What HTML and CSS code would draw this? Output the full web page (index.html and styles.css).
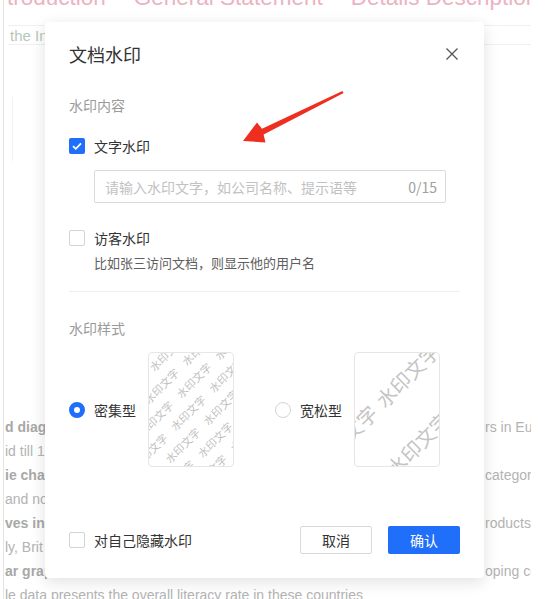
FILE: index.html
```html
<!DOCTYPE html>
<html lang="zh-CN">
<head>
<meta charset="utf-8">
<title>文档水印</title>
<link rel="stylesheet" href="styles.css">
</head>
<body>
<div class="page">
  <div class="tabs"><span>troduction</span><span>General Statement</span><span>Details Description</span></div>
  <div class="intro">the Introduction of the charts</div>
  <div class="box"></div>
  <div class="rows">
    <div class="row"><b>d diagram</b><span class="r">rs in Europe</span></div>
    <div class="row"><span>id till 1</span><span class="r"></span></div>
    <div class="row"><b>ie chart</b><span class="r">category</span></div>
    <div class="row"><span>and no</span><span class="r"></span></div>
    <div class="row"><b>ves in</b><span class="r">roducts</span></div>
    <div class="row"><span>ly, Brit</span><span class="r"></span></div>
    <div class="row"><b>ar graph</b><span class="r">oping countries</span></div>
    <div class="row"><span>le data presents the overall literacy rate in these countries</span></div>
  </div>
</div>

<div class="dialog">
  <div class="header">
    <div class="title">文档水印</div>
    <svg class="close" width="12" height="12" viewBox="0 0 12 12"><path d="M0.5 0.5 L11.5 11.5 M11.5 0.5 L0.5 11.5" stroke="#555" stroke-width="1.3" fill="none"/></svg>
  </div>

  <div class="section-label">水印内容</div>

  <div class="check-row first">
    <span class="cb checked"><svg width="16" height="16" viewBox="0 0 16 16"><path d="M4 8.2 L6.8 10.8 L12 5.4" stroke="#fff" stroke-width="1.8" fill="none"/></svg></span>
    <span>文字水印</span>
  </div>
  <div class="input-wrap">
    <input class="wm-input" type="text" placeholder="请输入水印文字，如公司名称、提示语等">
    <span class="count">0/15</span>
  </div>

  <div class="check-row visitor">
    <span class="cb"></span>
    <span>访客水印</span>
  </div>
  <div class="hint">比如张三访问文档，则显示他的用户名</div>

  <div class="divider"></div>

  <div class="section-label style-label">水印样式</div>

  <div class="styles">
    <div class="option">
      <span class="radio on"></span>
      <span class="opt-label">密集型</span>
      <div class="preview dense">
        <div class="layer">
          <div class="ln"><span>水印文字</span><span>水印文字</span><span>水印文字</span><span>水印文字</span><span>水印文字</span></div>
          <div class="ln odd"><span>水印文字</span><span>水印文字</span><span>水印文字</span><span>水印文字</span><span>水印文字</span></div>
          <div class="ln"><span>水印文字</span><span>水印文字</span><span>水印文字</span><span>水印文字</span><span>水印文字</span></div>
          <div class="ln odd"><span>水印文字</span><span>水印文字</span><span>水印文字</span><span>水印文字</span><span>水印文字</span></div>
          <div class="ln"><span>水印文字</span><span>水印文字</span><span>水印文字</span><span>水印文字</span><span>水印文字</span></div>
          <div class="ln odd"><span>水印文字</span><span>水印文字</span><span>水印文字</span><span>水印文字</span><span>水印文字</span></div>
          <div class="ln"><span>水印文字</span><span>水印文字</span><span>水印文字</span><span>水印文字</span><span>水印文字</span></div>
          <div class="ln odd"><span>水印文字</span><span>水印文字</span><span>水印文字</span><span>水印文字</span><span>水印文字</span></div>
          <div class="ln"><span>水印文字</span><span>水印文字</span><span>水印文字</span><span>水印文字</span><span>水印文字</span></div>
        </div>
      </div>
    </div>
    <div class="option">
      <span class="radio"></span>
      <span class="opt-label">宽松型</span>
      <div class="preview loose">
        <div class="layer">
          <div class="ln l1"><span>水印文字</span><span>水印文字</span></div>
          <div class="ln l2"><span>水印文字</span><span>水印文字</span></div>
        </div>
      </div>
    </div>
  </div>

  <div class="footer">
    <div class="check-row foot-check">
      <span class="cb"></span>
      <span>对自己隐藏水印</span>
    </div>
    <button class="btn cancel">取消</button>
    <button class="btn ok">确认</button>
  </div>
</div>

<svg class="arrow" width="557" height="599" viewBox="0 0 557 599">
  <polygon points="342.4,90.9 262,128.8 257,122.5 243,141 265.5,142.5 263.6,134.4 343.6,93.1" fill="#ee2e1f"/>
</svg>
</body>
</html>
```

FILE: styles.css
```css
* { box-sizing: border-box; }

body {
  margin: 0;
  width: 557px;
  height: 599px;
  overflow: hidden;
  position: relative;
  background: #fff;
  font-family: "Liberation Sans", Arial, sans-serif;
}

/* background document */
.page {
  margin-left: 3px;
  width: 528px;
  height: 599px;
  border-left: 1px solid #e4e4e4;
  overflow: hidden;
  display: flex;
  flex-direction: column;
}

.page > * { flex: none; }

.tabs {
  display: flex;
  gap: 28px;
  margin-top: -13px;
  padding-left: 3px;
  font-size: 22.5px;
  line-height: 22px;
  color: #ebb3c1;
  white-space: nowrap;
}

.intro {
  margin: 16px 0 0 4px;
  height: 20px;
  border-top: 1px solid #f0f0f0;
  border-bottom: 1px solid #f0f0f0;
  padding-left: 2px;
  font-size: 15px;
  line-height: 19px;
  color: #b7c7b8;
  white-space: nowrap;
}

.box {
  margin: 52px 0 0 8px;
  height: 64px;
  border-left: 1px solid #f2f2f2;
}

.rows {
  margin-top: 254px;
}

.row {
  display: flex;
  justify-content: space-between;
  height: 24px;
  line-height: 24px;
  padding-left: 1px;
  font-size: 14px;
  color: #b3b3b3;
  white-space: nowrap;
}

.row b { color: #a8a8a8; }

.row .r {
  width: 46px;
  overflow: hidden;
}

/* dialog */
.dialog {
  position: absolute;
  left: 45px;
  top: 22px;
  width: 439px;
  height: 556px;
  padding: 0 24px 24px;
  background: #fff;
  border-radius: 4px;
  box-shadow: 0 4px 16px rgba(0, 0, 0, 0.12);
  display: flex;
  flex-direction: column;
  font-family: "Noto Sans CJK SC", "Noto Sans", sans-serif;
  color: #333;
}

.header {
  display: flex;
  justify-content: space-between;
  align-items: center;
  height: 44px;
  padding-top: 20px;
}

.title {
  font-size: 18px;
  line-height: 24px;
  color: #333;
}

.close { margin-right: 2px; }

.section-label {
  margin-top: 29px;
  font-size: 14px;
  line-height: 20px;
  color: #9a9a9a;
}

.style-label { margin-top: 26px; }

.check-row {
  display: flex;
  align-items: center;
  gap: 9px;
  font-size: 14px;
  line-height: 20px;
  color: #333;
}

.check-row.first { margin-top: 21px; }
.check-row.visitor { margin-top: 25px; }

.cb {
  width: 16px;
  height: 16px;
  border: 1px solid #d4d4d4;
  border-radius: 2px;
  background: #fff;
  flex: none;
  display: flex;
}

.cb.checked {
  border: none;
  background: #1f6ffb;
}

.input-wrap {
  margin: 14px 0 0 25px;
  width: 352px;
  height: 33px;
  border: 1px solid #dadada;
  border-radius: 2px;
  display: flex;
  align-items: center;
  padding: 0 8px 0 10px;
}

.wm-input {
  flex: 1;
  min-width: 0;
  border: none;
  outline: none;
  padding: 0;
  background: transparent;
  font-family: inherit;
  font-size: 14px;
  color: #333;
}

.wm-input::placeholder { color: #c2c2c2; }

.count {
  font-size: 14px;
  color: #a0a0a0;
}

.hint {
  margin: 6px 0 0 25px;
  font-size: 13px;
  line-height: 18px;
  color: #5e5e5e;
}

.divider {
  margin-top: 19px;
  height: 1px;
  background: #efefef;
}

.styles {
  display: flex;
  gap: 41px;
  margin-top: 14px;
}

.option {
  display: flex;
  align-items: center;
}

.radio {
  width: 16px;
  height: 16px;
  border-radius: 50%;
  border: 1px solid #d4d4d4;
  background: #fff;
  flex: none;
}

.radio.on { border: 5px solid #1f6ffb; }

.opt-label {
  margin-left: 9px;
  font-size: 14px;
  line-height: 20px;
  color: #333;
}

.preview {
  position: relative;
  margin-left: 12px;
  width: 86px;
  height: 115px;
  border: 1px solid #e6e6e6;
  border-radius: 4px;
  overflow: hidden;
  background: #fff;
}

.layer {
  position: absolute;
  left: 50%;
  top: 50%;
  white-space: nowrap;
}

.dense .layer {
  width: 280px;
  transform: translate(-50%, -50%) rotate(-45deg);
  font-size: 11px;
  line-height: 19px;
  color: #bfbfbf;
}

.dense .ln { padding-left: 6px; }
.dense .ln.odd { padding-left: 33px; }
.dense .ln span { margin-right: 10px; }

.loose .layer {
  width: 300px;
  transform: translate(-50%, -50%) rotate(-45deg) translateY(11px);
  font-size: 20px;
  line-height: 56px;
  color: #c4c4c4;
}

.loose .ln span { margin-right: 8px; }
.loose .l1 { padding-left: 54px; }
.loose .l2 { padding-left: 13px; }

.footer {
  margin-top: auto;
  display: flex;
  align-items: center;
  gap: 16px;
}

.foot-check { flex: 1; }

.btn {
  width: 72px;
  height: 28px;
  border-radius: 2px;
  font-family: inherit;
  font-size: 14px;
  padding: 0;
  cursor: pointer;
}

.cancel {
  background: #fff;
  border: 1px solid #d9d9d9;
  color: #333;
}

.ok {
  background: #1f6ffb;
  border: none;
  color: #fff;
}

.arrow {
  position: absolute;
  left: 0;
  top: 0;
  pointer-events: none;
}
```
